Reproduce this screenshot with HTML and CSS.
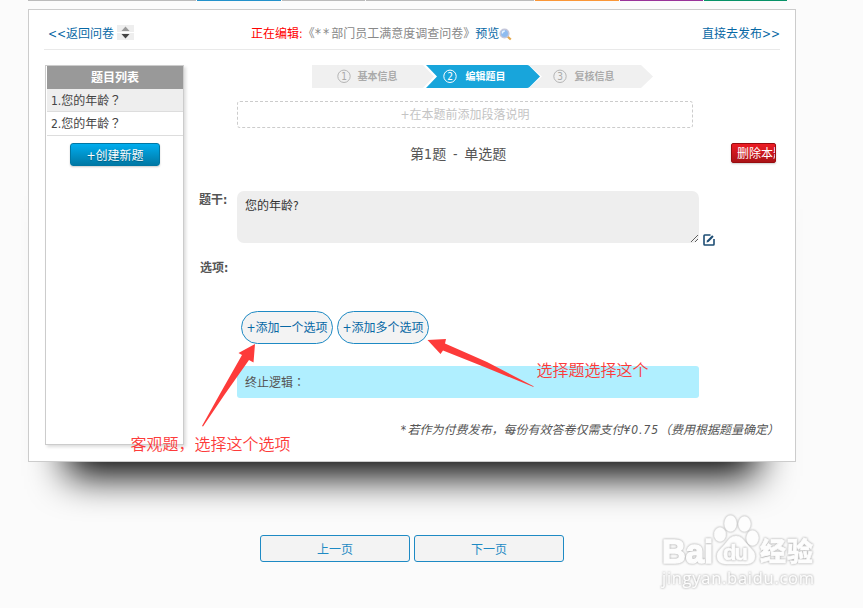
FILE: index.html
```
<!DOCTYPE html>
<html lang="zh-CN">
<head>
<meta charset="utf-8">
<title>编辑题目</title>
<link rel="stylesheet" href="styles.css">
</head>
<body>
<div class="page">
  <div class="tabs">
    <i class="tab gray wide"></i><i class="tab blue"></i><i class="tab gray"></i><i class="tab gray wide2"></i><i class="tab orange"></i><i class="tab purple"></i><i class="tab green"></i>
  </div>
  <div class="panel-wrap">
    <main class="panel">
      <header class="bar">
        <div class="back"><a>&lt;&lt;返回问卷</a>
          <svg class="sorter" width="17" height="15" viewBox="0 0 17 15"><path fill="#eee" d="M0 0h17v7H0zM0 8h17v7H0z"/><path fill="#999" d="M4.500 6h8l-4-4.500z"/><path fill="#444" d="M4.500 9h8l-4 4.500z"/></svg>
        </div>
        <div class="editing"><span class="red">正在编辑:</span><span class="name">《<span class="stars">**</span>部门员工满意度调查问卷》</span><a>预览</a><svg class="mag" width="13" height="13" viewBox="0 0 13 13"><path d="M8 8l3.800 3.500" stroke="#e5a94c" stroke-width="2.200"/><circle cx="5.500" cy="5.500" r="4.300" fill="#8fbcf0" stroke="#c3c6da" stroke-width="1.600"/><path d="M3.300 5.500a2.500 2.500 0 0 1 2.500-2.500" stroke="#e8f4ff" stroke-width="1.300" fill="none"/></svg></div>
        <a class="publish">直接去发布&gt;&gt;</a>
      </header>
      <div class="content">
        <aside class="side">
          <h2>题目列表</h2>
          <div class="item active">1.您的年龄<span class="mid" lang="zh-TW">？</span></div>
          <div class="item">2.您的年龄<span class="mid" lang="zh-TW">？</span></div>
          <button class="create">+创建新题</button>
        </aside>
        <section class="main">
          <svg class="steps" width="341" height="23" viewBox="0 0 341 23">
            <path fill="#f0f0f0" d="M0 0h329l12 11.500-12 11.500H0z"/>
            <path fill="#fff" d="M111 0h106l13 11.500L217 23H111l11-11.500z"/>
            <path fill="#18a5db" d="M114 0h101q1.500 0 2.500 1L228 11.500 217.500 22q-1 1-2.500 1H114l11-11.500z"/>
            <g fill="none" stroke-width="1"><circle cx="32" cy="11.300" r="6.200" stroke="#b5b5b5"/><circle cx="138" cy="11.300" r="6.200" stroke="#fff"/><circle cx="248" cy="11.300" r="6.200" stroke="#b5b5b5"/></g>
            <g class="nums"><text x="32" y="15">1</text><text x="138" y="15" class="on">2</text><text x="248" y="15">3</text></g>
            <g class="names"><text x="45.500" y="15.200">基本信息</text><text x="153.500" y="15.200" class="on">编辑题目</text><text x="262.500" y="15.200">复核信息</text></g>
          </svg>
          <div class="addpara">+在本题前添加段落说明</div>
          <div class="titlebar"><h1>第1题 - 单选题</h1><button class="delete">删除本题</button></div>
          <div class="stem">
            <label>题干:</label>
            <textarea>您的年龄?</textarea>
            <svg class="edit" width="12" height="12" viewBox="0 0 12 12" fill="none"><path d="M7.500 1H1.700Q1 1 1 1.700v8.600q0 .7.700.7h8.600q.7 0 .7-.7V5" stroke="#1d4d74" stroke-width="1.600"/><path d="M3.500 8.600l.5-2L9.200 1.300l1.500 1.500L5.500 8z" fill="#1d4d74"/></svg>
          </div>
          <div class="optlabel">选项:</div>
          <div class="options"><button>+添加一个选项</button><button>+添加多个选项</button></div>
          <div class="logic">终止逻辑<span class="mid" lang="zh-TW">：</span></div>
          <p class="note"><span class="ast">*</span>若作为付费发布，每份有效答卷仅需支付<span class="price">¥0.75</span>（费用根据题量确定）</p>
        </section>
      </div>
    </main>
  </div>
  <nav class="pager"><button>上一页</button><button>下一页</button></nav>
  <svg class="marks" width="863" height="608" viewBox="0 0 863 608">
    <path fill="#fd3b3a" d="M255 344l-1.500 18.500-4.500-2.500-24 34-22 32.500-1-.5 19-34 21-37-3.500-2z"/>
    <path fill="#fd3b3a" d="M427.500 340l18.500-1-1 4.500 42 18.500 47 24.500-1 .3-48.500-19.800-41.500-16.500-2.500 3.500z"/>
    <text x="130.500" y="450">客观题，选择这个选项</text>
    <text x="536.500" y="376">选择题选择这个</text>
  </svg>
  <svg class="brand" width="165" height="80" viewBox="655 510 165 80">
    <g class="wm">
      <text x="662" y="562.500" class="big" textLength="51" lengthAdjust="spacingAndGlyphs">Bai</text>
      <path d="M736 536c5 0 7 3 10 7 4 5 9 8 9 13 0 6-4 8-9 8H727c-6 0-10-2-10-8 0-5 5-8 9-13 3-4 5-7 10-7z"/>
      <ellipse cx="720" cy="534.500" rx="5.800" ry="7"/><ellipse cx="730.500" cy="523.500" rx="6" ry="8"/><ellipse cx="744.500" cy="524" rx="6" ry="7.500"/><ellipse cx="752.500" cy="538" rx="6" ry="7.500"/>
    </g>
    <g class="wm"><text x="723" y="560" class="du" textLength="25">du</text></g>
    <g class="wm">
      <text x="760" y="561" class="cn" textLength="53">经验</text>
      <text x="662" y="583.500" class="url" textLength="152">jingyan.baidu.com</text>
    </g>
  </svg>
</div>
</body>
</html>
```
FILE: styles.css
```
* { box-sizing: border-box; }
body {
  margin: 0;
  background: #fbfbfb;
  font: 12px/18px "DejaVu Sans Condensed", "Noto Sans CJK SC", sans-serif;
  color: #555;
}
button, textarea { font: inherit; margin: 0; }
a { color: #0768a5; }
.mid { font-family: "Noto Sans CJK TC", sans-serif; line-height: 1; }
.page { position: relative; width: 863px; height: 608px; overflow: hidden; }
.tabs { display: flex; gap: 1px; height: 9px; padding-left: 28px; }
.tab { width: 83.500px; height: 1px; }
.gray { background: #bbb; }
.wide, .wide2 { width: 168px; }
.blue { background: #2492cb; }
.orange { background: #fa9637; }
.purple { background: #993399; }
.green { width: 83px; background: #079267; }
.panel-wrap { position: relative; z-index: 0; width: 768px; height: 453px; margin-left: 28px; }
.panel-wrap::before {
  content: "";
  position: absolute;
  z-index: -1;
  left: 39px;
  right: 39px;
  top: 200px;
  bottom: -14px;
  background: #000;
  filter: blur(19px);
}
.panel { height: 453px; padding: 0 15px; border: 1px solid #ccc; background: #fff; }
.bar {
  display: grid;
  grid-template-columns: 203px 1fr auto;
  align-items: center;
  height: 40px;
  padding: 9px 0 0 4px;
  border-bottom: 1px solid #e9e9e9;
}
.back { display: flex; gap: 3px; }
.editing { display: flex; align-items: center; }
.red { color: #f00; }
.name { color: #888; }
.stars { font-size: 14px; line-height: 1; letter-spacing: 2px; }
.content { display: flex; padding-top: 15px; }
.side {
  width: 139px;
  height: 380px;
  margin-left: 1px;
  padding-left: 1px;
  border: 1px solid #ccc;
  box-shadow: 2px 2px 3px #ddd;
}
.side h2 {
  margin: 0;
  height: 23px;
  font-size: 12px;
  line-height: 24px;
  text-align: center;
  color: #fff;
  background: #999;
}
.item { height: 23px; padding-left: 4px; line-height: 24px; border-bottom: 1px solid #ddd; color: #444; }
.item + .item { height: 24px; line-height: 25px; }
.active { background: #eee; }
.create {
  display: block;
  width: 90px;
  height: 23px;
  margin: 7px 0 0 23px;
  padding: 2px 0 0;
  line-height: 20px;
  color: #fff;
  border: 1px solid #0076a3;
  border-radius: 3px;
  background: linear-gradient(#00adee, #0078a5);
  box-shadow: 0 1px 2px rgba(0,0,0,.2);
  text-shadow: 0 1px 1px rgba(0,0,0,.3);
}
.main { flex: 1; padding-left: 15px; }
.steps { display: block; margin-left: 113px; }
.steps text { fill: #aaa; font-weight: bold; }
.steps .on { fill: #fff; }
.nums { text-anchor: middle; font-size: 10px; }
.nums text { font-weight: normal; }
.names { font-size: 10px; }
.addpara {
  width: 456px;
  height: 27px;
  margin: 13px 0 0 38px;
  border: 1px dashed #ccc;
  border-radius: 3px;
  text-align: center;
  line-height: 26px;
  color: #c4c4c4;
}
.titlebar { display: flex; justify-content: space-between; height: 34px; padding: 15px 4px 0 211px; }
h1 { margin: 0; font-size: 14px; line-height: 22px; font-weight: normal; white-space: pre; word-spacing: 2.500px; letter-spacing: .1px; }
.delete {
  width: 45px;
  height: 20px;
  padding: 0 0 0 5px;
  line-height: 20px;
  text-align: left;
  overflow: hidden;
  white-space: nowrap;
  color: #fff;
  border: 1px solid #980c10;
  border-radius: 2px;
  background: linear-gradient(#ed1c24, #aa1317);
  box-shadow: 0 1px 2px rgba(0,0,0,.2);
}
.stem { display: flex; height: 52px; margin-top: 29px; }
.stem label { width: 38px; font-weight: bold; }
.stem textarea {
  width: 462px;
  height: 52px;
  padding: 6px 8px;
  border: 0;
  border-radius: 7px;
  background: #eee;
  color: #333;
}
.edit { align-self: flex-end; margin: 0 0 -3px 4px; }
.optlabel { margin: 16px 0 0 1px; font-weight: bold; }
.options { display: flex; gap: 4px; margin: 34px 0 0 42px; }
.options button {
  width: 92px;
  height: 33px;
  padding: 0;
  white-space: nowrap;
  color: #0768a5;
  border: 1px solid #1e8ac4;
  border-radius: 17px;
  background: #f3f3f3;
}
.logic {
  width: 462px;
  height: 32px;
  margin: 22px 0 0 38px;
  padding-left: 8px;
  line-height: 35px;
  border-radius: 3px;
  background: #b0efff;
}
.note { margin: 23px 1px 0 0; text-align: right; font-style: italic; white-space: nowrap; }
.ast { letter-spacing: 1.500px; }
.price { letter-spacing: .9px; }
.pager { display: flex; gap: 4px; margin: 73px 0 0 260px; }
.pager button {
  width: 150px;
  height: 27px;
  padding: 2px 0 0;
  color: #1e8ac4;
  border: 1px solid #1e8ac4;
  border-radius: 3px;
  background: #f3f3f3;
}
.marks { position: absolute; left: 0; top: 0; }
.marks text { font: 350 16px "Noto Sans CJK SC", sans-serif; fill: #fd3b3a; }
.brand { position: absolute; left: 655px; top: 510px; }
.wm { fill: #fdfdfd; stroke: #fdfdfd; stroke-width: .6; filter: drop-shadow(0 0 .8px #aaa) drop-shadow(0 0 .3px #e4e4e4); }
.big { font: bold 34px "Liberation Sans", sans-serif; stroke-width: 1.500; }
.du { font: bold 22px "Liberation Sans", sans-serif; }
.cn { font: 900 26px "Noto Sans CJK SC", sans-serif; }
.url { font: 16.500px "Open Sans", sans-serif; stroke-width: .2; }
```
